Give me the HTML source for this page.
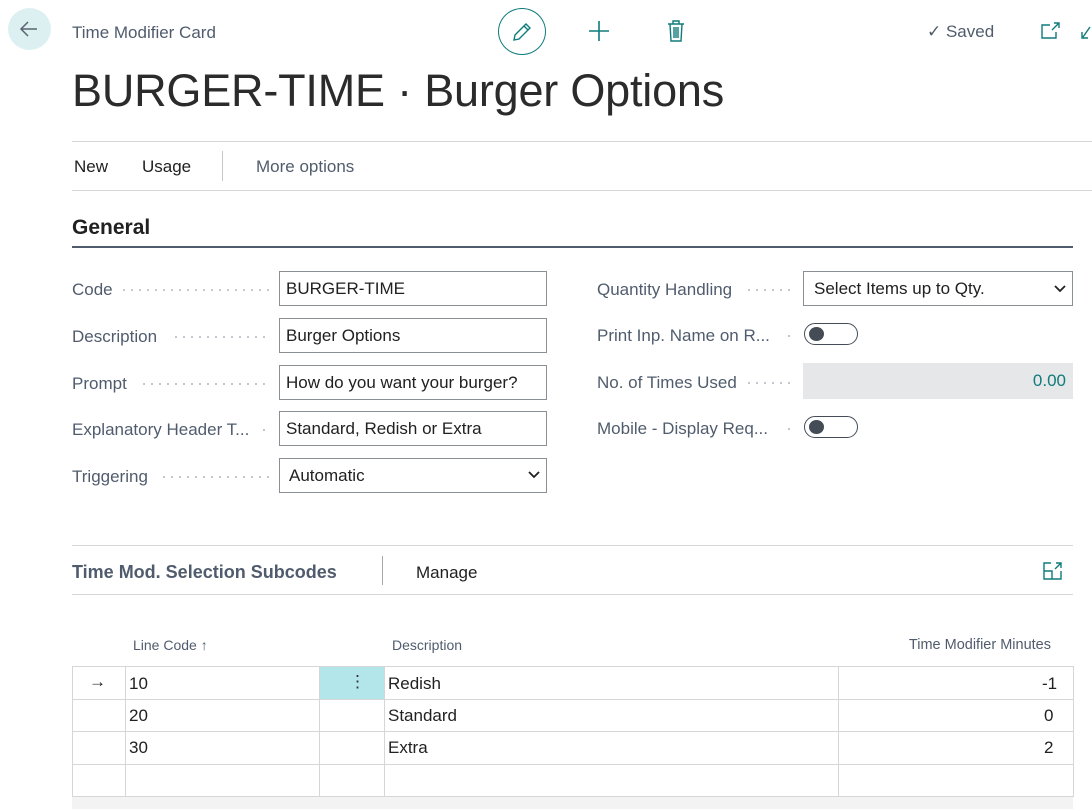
<!DOCTYPE html>
<html><head><meta charset="utf-8"><style>
*{margin:0;padding:0;box-sizing:border-box}
body{width:1092px;height:809px;background:#fff;font-family:"Liberation Sans",sans-serif;color:#212121;position:relative;overflow:hidden}
.a{position:absolute;white-space:nowrap}
.lbl{color:#505c6d;font-size:17px}
.dots{position:absolute;height:2px;background-image:radial-gradient(circle,#b0b6bd 0.8px,transparent 1px);background-size:8px 2px}
.inp{position:absolute;border:1px solid #8a8f94;height:35px;font-size:17px;line-height:33px;padding-left:6px;color:#212121;background:#fff}
.tog{position:absolute;width:54px;height:22px;border:1px solid #444c56;border-radius:11px}
.tog:after{content:"";position:absolute;left:4px;top:3px;width:15px;height:14px;border-radius:50%;background:#444c56}
.hl{position:absolute;height:1px;background:#d6d6d6}
.vl{position:absolute;width:1px;background:#d6d6d6}
.cell{position:absolute;font-size:17px;color:#212121}
</style></head><body>
<div class="a" style="left:8px;top:8px;width:43px;height:42px;border-radius:50%;background:#dcf0f2"></div>
<svg class="a" style="left:17px;top:17px" width="24" height="24" viewBox="0 0 24 24"><path d="M20 12H4M11 5l-7 7 7 7" fill="none" stroke="#5a6470" stroke-width="1.5"/></svg>
<div class="a" style="left:72px;top:23px;font-size:17px;color:#505c6d">Time Modifier Card</div>
<div class="a" style="left:498px;top:8px;width:48px;height:47px;border-radius:50%;border:1px solid #0f7b7b"></div>
<svg class="a" style="left:510px;top:20px" width="24" height="24" viewBox="0 0 24 24"><path d="M4 20l1-5L16 4l4 4L9 19z M14 6l4 4" fill="none" stroke="#0f7b7b" stroke-width="1.4"/></svg>
<svg class="a" style="left:588px;top:20px" width="22" height="22" viewBox="0 0 22 22"><path d="M11 1v20M1 11h20" stroke="#0f7b7b" stroke-width="1.6"/></svg>
<svg class="a" style="left:666px;top:20px" width="20" height="22" viewBox="0 0 20 22"><path d="M2 4h16M7 4V1h6v3M4 4l1 17h10l1-17M8 7v11M10 7v11M12 7v11" fill="none" stroke="#0f7b7b" stroke-width="1.4"/></svg>
<div class="a" style="left:927px;top:22px;font-size:17px;color:#505c6d">✓ Saved</div>
<svg class="a" style="left:1041px;top:22px" width="20" height="18" viewBox="0 0 20 18"><path d="M9 3H1v13h14V10M13 1h5v5M18 1l-7 7" fill="none" stroke="#0f7b7b" stroke-width="1.4"/></svg>
<svg class="a" style="left:1080px;top:25px" width="12" height="16" viewBox="0 0 12 16"><path d="M10 2L3 12M2 7v6h6" fill="none" stroke="#0f7b7b" stroke-width="1.4"/></svg>
<div class="a" style="left:72px;top:65px;font-size:45px;color:#2b2b2b;letter-spacing:-0.2px">BURGER-TIME · Burger Options</div>
<div class="hl" style="left:72px;top:141px;width:1020px"></div>
<div class="a" style="left:74px;top:157px;font-size:17px">New</div>
<div class="a" style="left:142px;top:157px;font-size:17px">Usage</div>
<div class="vl" style="left:222px;top:151px;height:30px;background:#c8c8c8"></div>
<div class="a" style="left:256px;top:157px;font-size:17px;color:#505c6d">More options</div>
<div class="hl" style="left:72px;top:190px;width:1020px"></div>
<div class="a" style="left:72px;top:216px;font-size:21px;font-weight:bold;color:#212121">General</div>
<div class="hl" style="left:72px;top:246px;width:1001px;height:2px;background:#505c6d"></div>

<div class="a lbl" style="left:72px;top:280px">Code</div><div class="dots" style="left:120px;top:289px;width:150px"></div>
<div class="inp" style="left:279px;top:271px;width:268px">BURGER-TIME</div>
<div class="a lbl" style="left:72px;top:327px">Description</div><div class="dots" style="left:172px;top:336px;width:98px"></div>
<div class="inp" style="left:279px;top:318px;width:268px">Burger Options</div>
<div class="a lbl" style="left:72px;top:374px">Prompt</div><div class="dots" style="left:140px;top:383px;width:130px"></div>
<div class="inp" style="left:279px;top:365px;width:268px">How do you want your burger?</div>
<div class="a lbl" style="left:72px;top:420px">Explanatory Header T...</div><div class="dots" style="left:260px;top:429px;width:10px"></div>
<div class="inp" style="left:279px;top:411px;width:268px">Standard, Redish or Extra</div>
<div class="a lbl" style="left:72px;top:467px">Triggering</div><div class="dots" style="left:160px;top:476px;width:110px"></div>
<div class="inp" style="left:279px;top:458px;width:268px;padding-left:9px">Automatic</div>
<svg class="a" style="left:528px;top:470px" width="12" height="10" viewBox="0 0 12 10"><path d="M1 2l5 5 5-5" fill="none" stroke="#212121" stroke-width="1.8"/></svg>

<div class="a lbl" style="left:597px;top:280px">Quantity Handling</div><div class="dots" style="left:745px;top:289px;width:48px"></div>
<div class="inp" style="left:803px;top:271px;width:270px;padding-left:10px">Select Items up to Qty.</div>
<svg class="a" style="left:1054px;top:284px" width="12" height="10" viewBox="0 0 12 10"><path d="M1 2l5 5 5-5" fill="none" stroke="#212121" stroke-width="1.8"/></svg>
<div class="a lbl" style="left:597px;top:326px">Print Inp. Name on R...</div><div class="dots" style="left:785px;top:335px;width:8px"></div>
<div class="tog" style="left:804px;top:323px"></div>
<div class="a lbl" style="left:597px;top:373px">No. of Times Used</div><div class="dots" style="left:745px;top:382px;width:48px"></div>
<div class="a" style="left:803px;top:363px;width:270px;height:36px;background:#e6e7e9;font-size:17px;color:#0f7b7b;text-align:right;padding-right:7px;line-height:36px">0.00</div>
<div class="a lbl" style="left:597px;top:419px">Mobile - Display Req...</div><div class="dots" style="left:785px;top:428px;width:8px"></div>
<div class="tog" style="left:804px;top:416px"></div>

<div class="hl" style="left:72px;top:545px;width:1001px"></div>
<div class="a" style="left:72px;top:562px;font-size:18px;font-weight:bold;color:#505c6d">Time Mod. Selection Subcodes</div>
<div class="vl" style="left:382px;top:556px;height:29px;background:#a8a8a8"></div>
<div class="a" style="left:416px;top:563px;font-size:17px">Manage</div>
<svg class="a" style="left:1043px;top:562px" width="20" height="18" viewBox="0 0 20 18"><path d="M8 1H1v16h17V9M1 9h8v8M13 1h5v5M18 1l-6 6" fill="none" stroke="#0f7b7b" stroke-width="1.4"/></svg>
<div class="hl" style="left:72px;top:594px;width:1001px"></div>

<div class="a" style="left:133px;top:637px;font-size:14px;color:#505c6d">Line Code ↑</div>
<div class="a" style="left:392px;top:637px;font-size:14px;color:#505c6d">Description</div>
<div class="a" style="right:41px;top:637px;font-size:14.5px;color:#505c6d">Time Modifier Minutes</div>

<div class="hl" style="left:72px;top:666px;width:1001px"></div>
<div class="hl" style="left:72px;top:699px;width:1001px"></div>
<div class="hl" style="left:72px;top:731px;width:1001px"></div>
<div class="hl" style="left:72px;top:764px;width:1001px"></div>
<div class="hl" style="left:72px;top:796px;width:1001px"></div>
<div class="a" style="left:72px;top:797px;width:1001px;height:12px;background:#f3f3f4"></div>
<div class="a" style="left:319px;top:667px;width:65px;height:32px;background:#b3e6ea"></div>
<div class="vl" style="left:72px;top:666px;height:131px"></div>
<div class="vl" style="left:125px;top:666px;height:131px"></div>
<div class="vl" style="left:319px;top:666px;height:131px"></div>
<div class="vl" style="left:384px;top:666px;height:131px"></div>
<div class="vl" style="left:838px;top:666px;height:131px"></div>
<div class="vl" style="left:1073px;top:666px;height:131px"></div>
<div class="a" style="left:89px;top:672px;font-size:17px;color:#212121">→</div>
<div class="a" style="left:349px;top:672px;font-size:17px;color:#333">⋮</div>
<div class="cell" style="left:129px;top:674px">10</div>
<div class="cell" style="left:388px;top:674px">Redish</div>
<div class="cell" style="left:1042px;top:674px">-1</div>
<div class="cell" style="left:129px;top:706px">20</div>
<div class="cell" style="left:388px;top:706px">Standard</div>
<div class="cell" style="left:1044px;top:706px">0</div>
<div class="cell" style="left:129px;top:738px">30</div>
<div class="cell" style="left:388px;top:738px">Extra</div>
<div class="cell" style="left:1044px;top:738px">2</div>
</body></html>
